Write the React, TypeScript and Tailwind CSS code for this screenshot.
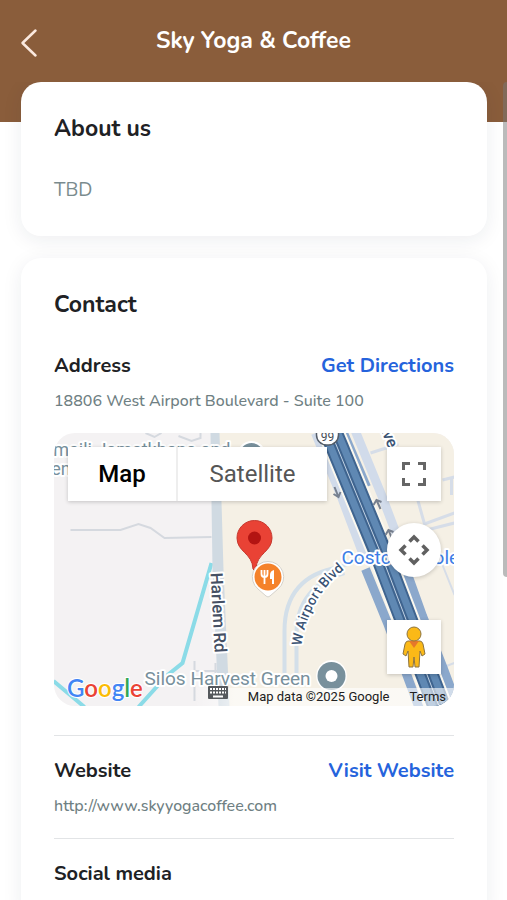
import type { ReactNode } from "react";

function ContactRow({ title, link, href, children }: { title: string; link?: string; href?: string; children?: ReactNode }) {
  return (
    <>
      <div className="flex items-center justify-between text-[20px] leading-[30px] font-bold">
        <h3 className="text-[#202124]">{title}</h3>
        {link && (
          <a href={href} className="text-[#2563dc]">
            {link}
          </a>
        )}
      </div>
      {children && <p className="mt-2 text-[16px] leading-6 font-medium text-[#6f7f83]">{children}</p>}
    </>
  );
}

function MapCanvas() {
  return (
    <svg viewBox="0 0 401 273" preserveAspectRatio="xMidYMid slice" className="block h-full w-full" fontFamily="Roboto, sans-serif" aria-hidden="true">
      <rect width="401" height="273" fill="#f4f2f3" />
      <path d="M161 0H401V273H171L165 137Z" fill="#f5f0e5" />

      {/* minor roads */}
      <g fill="none" stroke="#d5d9df" strokeWidth="2">
        <path d="M17 97H67L85 91L97 95L111 105L158 104" />
        <path d="M92 0L101 4L108 0M125 3L138 8L147 5V0" />
        <path d="M141 228V268M141 238H164M162 230V246" />
      </g>
      <g fill="none" stroke="#d6dde8" strokeWidth="3">
        <path d="M317 20L345 11M389 47L401 44M398 45V62" />
        <path d="M364 66L371 91L401 80M369 98L401 90" />
        <path d="M389 132L401 162M385 236L401 230" strokeWidth="2" />
      </g>

      {/* water */}
      <path d="M158 130L129 230L113 243L85 274M0 248L31 274" fill="none" stroke="#8bdbe7" strokeWidth="4" />

      {/* Harlem Rd */}
      <path d="M157 0H166L170 137L176 273H165L159 137Z" fill="#d0dae2" />

      {/* W Airport Blvd */}
      <path d="M231 240V198C231 160 251 140 286 134L310 124M243 240V200C243 170 260 148 291 140" fill="none" stroke="#d3dfe9" strokeWidth="4" />

      {/* frontage roads and ramps */}
      <g fill="none">
        <path d="M262 0L288 64L311 125" stroke="#d1dbea" strokeWidth="9" />
        <path d="M301 -4L328 62L350 120" stroke="#d1dbea" strokeWidth="9" />
        <path d="M312 136L334 190L366 276" stroke="#8ba8cc" strokeWidth="9" />
        <path d="M350 130L369 183L390 236L405 276" stroke="#8ba8cc" strokeWidth="9" />
        <path d="M290 0L313 54" stroke="#8ba8cc" strokeWidth="9" />
      </g>

      {/* highway */}
      <g fill="none">
        <path d="M276 -4L284 15L326 117L358 201L387 277" stroke="#fbf8ef" strokeWidth="27" />
        <path d="M276 -4L284 15L326 117L358 201L387 277" stroke="#3f648f" strokeWidth="23" />
        <path d="M276 -4L284 15L326 117L358 201L387 277" stroke="#5f88b3" strokeWidth="19" />
        <path d="M276 -4L284 15L326 117L358 201L387 277" stroke="#3f648f" strokeWidth="5" />
        <path d="M276 -4L284 15L326 117L358 201L387 277" stroke="#c3d3e4" strokeWidth="1" />
      </g>
      <g fill="none" stroke="#77808f" strokeWidth="2">
        <path d="M281 54L285 64M280 61L285 64L287 59" />
        <path d="M327 76L323 67M320 72L323 67L328 69" />
        <path d="M339 107L335 97M332 102L335 97L340 99" />
      </g>
      <g>
        <rect x="263" y="-10" width="22" height="22" rx="10" fill="#fff" stroke="#555d68" strokeWidth="1.5" />
        <text x="274" y="8" fontSize="12" textAnchor="middle" fill="#444b55">99</text>
      </g>

      {/* labels */}
      <g stroke="#fff" strokeWidth="4" strokeLinejoin="round" paintOrder="stroke">
        <text x="177" y="23" fontSize="18" textAnchor="end" fill="#78909c">Ismaili Jamatkhana and</text>
        <text x="-14" y="42" fontSize="18" fill="#78909c">Center</text>
        <text x="91" y="252" fontSize="19" fill="#78909c">Silos Harvest Green</text>
        <text x="288" y="131" fontSize="19" fill="#3c7de6">Costco Wholesale</text>
        <text transform="translate(157 140) rotate(87)" fontSize="17" fontWeight="500" fill="#455064">Harlem Rd</text>
        <text transform="translate(325 -9) rotate(68)" fontSize="16" fontWeight="500" fill="#3a5374">Ave</text>
        <path id="airport" d="M248 213C251 186 264 158 290 137L300 130" fill="none" stroke="none" />
        <text fontSize="14" fontWeight="500" fill="#3a5374">
          <textPath href="#airport">W Airport Blvd</textPath>
        </text>
      </g>

      {/* place markers */}
      <circle cx="198" cy="22" r="13" fill="#78909c" stroke="#fff" strokeWidth="2" />
      <path d="M278 227a16 16 0 0 1 10 28l-10 7-10-7a16 16 0 0 1 10-28Z" fill="#fff" />
      <circle cx="278" cy="243" r="14" fill="#78909c" />
      <circle cx="278" cy="243" r="6" fill="#fff" />
      <path d="M201 87.500C191 87.500 183.500 95.500 183.500 105C183.500 119 199 120 199.500 136Q201 139 202.500 136C203 120 218.500 119 218.500 105C218.500 95.500 211 87.500 201 87.500Z" fill="#e94235" stroke="#c5392f" />
      <circle cx="201" cy="105" r="6.500" fill="#b31412" />
      <path d="M214.500 128.500a15.500 15.500 0 0 1 10 27.500l-8 7q-2 2-4 0l-8-7a15.500 15.500 0 0 1 10-27.500Z" fill="#fff" stroke="#d4d1ca" />
      <circle cx="214.500" cy="144" r="13.500" fill="#f5822a" />
      <path d="M208 137v4q0 3 3 3t3-3v-4M211 137v14" fill="none" stroke="#fff" strokeWidth="1.800" />
      <path d="M220.500 137v14h-2v-5h-2v-4q0-4 4-5Z" fill="#fff" />
    </svg>
  );
}

function GoogleMap() {
  const control = "flex h-[54px] w-[54px] items-center justify-center bg-white shadow-[0_1px_4px_rgba(0,0,0,0.2)]";

  return (
    <div className="relative mt-5 h-[273px] overflow-hidden rounded-[21px] font-[Roboto,sans-serif]">
      <MapCanvas />

      <div className="absolute top-[14px] left-[14px] flex h-[54px] text-[24px] shadow-[0_1px_4px_rgba(0,0,0,0.2)]">
        <button type="button" className="w-[108px] bg-white font-medium text-black">Map</button>
        <button type="button" className="w-[151px] border-l-2 border-[#eeeeee] bg-white text-[#565656]">Satellite</button>
      </div>

      <div className="absolute top-[14px] right-[13px] flex flex-col">
        <button type="button" aria-label="Toggle fullscreen view" className={control}>
          <svg width="26" height="26" viewBox="0 0 26 26" fill="none" stroke="#666" strokeWidth="3">
            <path d="M2.500 9V2.500H9M17 2.500h6.500V9M23.500 17v6.500H17M9 23.500H2.500V17" />
          </svg>
        </button>
        <button type="button" aria-label="Map camera controls" className="mt-[22px] flex h-[54px] w-[54px] items-center justify-center rounded-full bg-white shadow-[0_1px_4px_rgba(0,0,0,0.2)]">
          <svg width="32" height="32" viewBox="0 0 32 32" fill="none" stroke="#606060" strokeWidth="3.500">
            <path d="M11.500 7.500L16 3l4.500 4.500M11.500 24.500L16 29l4.500-4.500M7.500 11.500L3 16l4.500 4.500M24.500 11.500L29 16l-4.500 4.500" />
          </svg>
        </button>
        <button type="button" aria-label="Drag Pegman onto the map to open Street View" className="mt-[43px] flex h-[54px] w-[54px] items-center justify-center bg-white shadow-[0_1px_4px_rgba(0,0,0,0.2)]">
          <svg width="24" height="42" viewBox="0 0 24 42" fill="#fbb917" stroke="#8c7440" strokeWidth="1">
            <path d="M6 15h12q2 0 3 3l2 10-3 2-2-5-1 16h-4l-1-10-1 10H7L6 25l-2 5-3-2 2-10q1-3 3-3Z" />
            <path d="M7 15h10l-5 7Z" fill="#e6782a" stroke="none" />
            <circle cx="12" cy="8" r="7" />
          </svg>
        </button>
      </div>

      <div className="absolute inset-x-0 bottom-0 flex h-[18px] items-center justify-end bg-linear-to-r from-transparent from-35% to-white/60 to-45% pr-2 text-[13px] text-[#202020]">
        <button type="button" aria-label="Keyboard shortcuts" className="mr-5">
          <svg width="20" height="14" viewBox="0 0 20 14" className="mb-2">
            <rect width="20" height="13" rx="1" fill="#55595d" />
            <path d="M2 3h16M2 6.500h16" stroke="#fff" strokeWidth="2" strokeDasharray="2 1" />
            <path d="M5 10.500h10" stroke="#fff" strokeWidth="2" />
          </svg>
        </button>
        <span>Map data ©2025 Google</span>
        <a href="#terms" className="ml-5">Terms</a>
      </div>

      <a
        href="#google-maps"
        aria-label="Open this area in Google Maps"
        className="absolute bottom-1 left-[13px] font-[Lato,sans-serif] text-[24px] leading-7 font-semibold [paint-order:stroke] [-webkit-text-stroke:2px_white]"
      >
        <span className="text-[#4285f4]">G</span>
        <span className="text-[#ea4335]">o</span>
        <span className="text-[#fbbc04]">o</span>
        <span className="text-[#4285f4]">g</span>
        <span className="text-[#34a853]">l</span>
        <span className="text-[#ea4335]">e</span>
      </a>
    </div>
  );
}

export default function App() {
  const card = "rounded-[20px] bg-white px-[33px] pt-[33px] pb-[31px] shadow-[0_4px_20px_rgba(30,35,60,0.08)]";

  return (
    <div className="relative flex h-screen flex-col overflow-hidden bg-white font-[Nunito,Lato,sans-serif]">
      <header className="h-[122px] shrink-0 bg-[#8a5d3b] px-5">
        <div className="grid h-[82px] grid-cols-[32px_1fr_32px] items-center">
          <button type="button" aria-label="Back" className="pt-1">
            <svg width="18" height="30" viewBox="0 0 18 30" fill="none" stroke="#fbe9df" strokeWidth="2.500" strokeLinecap="round" strokeLinejoin="round">
              <path d="M15.500 2.500L2.500 15l13 12.500" />
            </svg>
          </button>
          <h1 className="text-center text-[23px] leading-7 font-bold text-white">Sky Yoga &amp; Coffee</h1>
        </div>
      </header>

      <main className="-mt-10 flex min-h-0 flex-1 flex-col gap-[22px] overflow-y-auto pr-5 pl-[21px] [scrollbar-width:none]">
        <section className={card}>
          <h2 className="text-[23px] leading-7 font-bold text-[#202124]">About us</h2>
          <p className="mt-8 text-[19px] leading-[30px] text-[#7a8b8e]">TBD</p>
        </section>

        <section className={card}>
          <h2 className="mb-8 text-[23px] leading-7 font-bold text-[#202124]">Contact</h2>
          <ContactRow title="Address" link="Get Directions" href="#directions">
            18806 West Airport Boulevard - Suite 100
          </ContactRow>
          <GoogleMap />
          <div className="mt-[29px] border-y border-[#e2e4e6] py-5">
            <ContactRow title="Website" link="Visit Website" href="http://www.skyyogacoffee.com">
              http://www.skyyogacoffee.com
            </ContactRow>
          </div>
          <div className="pt-5">
            <ContactRow title="Social media" />
          </div>
        </section>
      </main>

      {/* scroll thumb */}
      <div className="absolute top-[82px] right-0 h-[495px] w-1 rounded-l-sm bg-[#777777]/50" />
    </div>
  );
}
